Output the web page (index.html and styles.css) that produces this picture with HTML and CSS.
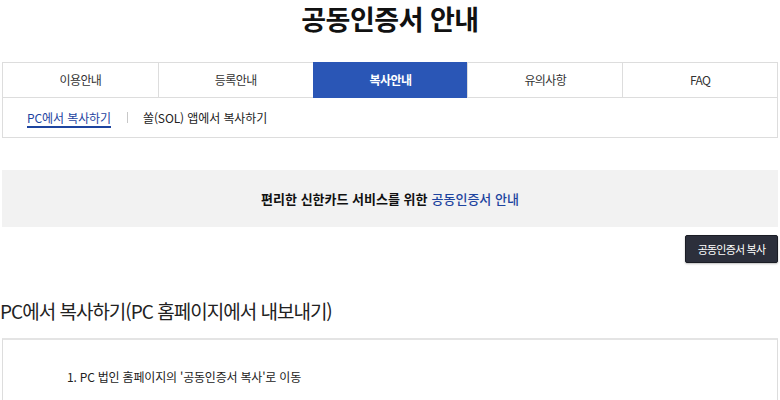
FILE: index.html
```html
<!DOCTYPE html>
<html lang="ko">
<head>
    <meta charset="UTF-8">
    <meta name="viewport" content="width=device-width, initial-scale=1.0">
    <title>공동인증서 안내</title>
    <link rel="stylesheet" href="styles.css">
</head>
<body>

    <div class="page">
        <h1 class="page-title">공동인증서 안내</h1>

        <ul class="tabs">
            <li class="tab">이용안내</li>
            <li class="tab">등록안내</li>
            <li class="tab active">복사안내</li>
            <li class="tab">유의사항</li>
            <li class="tab">FAQ</li>
        </ul>

        <div class="subtabs">
            <span class="subtab current">PC에서 복사하기</span>
            <span class="divider"></span>
            <span class="subtab">쏠(SOL) 앱에서 복사하기</span>
        </div>

        <div class="banner">
            편리한 신한카드 서비스를 위한 <span class="point">공동인증서 안내</span>
        </div>

        <div class="btn-row">
            <button class="btn-dark">공동인증서 복사</button>
        </div>

        <h2 class="section-title">PC에서 복사하기(PC 홈페이지에서 내보내기)</h2>

        <div class="step-box">
            <p class="step">1. PC 법인 홈페이지의 '공동인증서 복사'로 이동</p>
        </div>
    </div>

</body>
</html>
```

FILE: styles.css
```css
:root {
    --blue: #2a56b6;
    --linkBlue: #1d449f;
    --line: #dddddd;
}

body {
    margin: 0;
    font-family: 'Noto Sans CJK KR', 'Noto Sans', sans-serif;
    color: #222;
    background: #fff;
    overflow: hidden;
}

.page {
    padding: 0 2px;
}

.page-title {
    margin: 0 0 28px;
    padding-top: 4px;
    font-size: 27px;
    line-height: 30px;
    font-weight: 700;
    text-align: center;
    color: #111;
    letter-spacing: -0.5px;
}

/* main tabs */
.tabs {
    display: grid;
    grid-template-columns: repeat(5, 1fr);
    margin: 0;
    padding: 0;
    list-style: none;
    border: 1px solid var(--line);
}

.tab {
    height: 34px;
    line-height: 34px;
    text-align: center;
    font-size: 12px;
    letter-spacing: -0.6px;
    color: #333;
    border-left: 1px solid var(--line);
}

.tab:first-child {
    border-left: none;
}

.tab.active {
    background: var(--blue);
    color: #fff;
    font-weight: 700;
    margin: -1px 0;
    height: 36px;
    line-height: 36px;
    border-left-color: var(--blue);
}

/* sub tabs */
.subtabs {
    display: flex;
    align-items: center;
    height: 39px;
    padding: 0 24px;
    border: 1px solid var(--line);
    border-top: none;
    font-size: 12px;
    letter-spacing: -0.1px;
}

.subtab {
    line-height: 16px;
    color: #222;
}

.subtab.current {
    color: var(--linkBlue);
    padding-top: 2px;
    border-bottom: 2px solid var(--linkBlue);
}

.divider {
    width: 1px;
    height: 11px;
    margin: 0 15px 0 16px;
    background: #c8c8c8;
}

/* banner */
.banner {
    display: flex;
    align-items: center;
    justify-content: center;
    gap: 4px;
    height: 57px;
    margin-top: 32px;
    background: #f2f2f2;
    font-size: 13px;
    font-weight: 700;
    letter-spacing: 0;
    color: #111;
}

.banner .point {
    color: var(--linkBlue);
    font-weight: 500;
}

.btn-row {
    display: flex;
    justify-content: flex-end;
    margin-top: 8px;
}

.btn-dark {
    width: 93px;
    height: 28px;
    padding: 0;
    background: #2c2f3b;
    border: 1px solid #1b1d25;
    border-radius: 2px;
    color: #fff;
    font-family: inherit;
    font-size: 11px;
    letter-spacing: -0.8px;
    box-shadow: 0 1px 2px rgba(0, 0, 0, 0.25);
}

/* content */
.section-title {
    margin: 35px 0 14px 0;
    margin-left: -2px;
    font-size: 19px;
    line-height: 26px;
    font-weight: 400;
    letter-spacing: -1px;
    color: #222;
}

.step-box {
    height: 100px;
    padding: 28px 64px;
    border: 1px solid var(--line);
    border-top: 2px solid #e4e4e4;
}

.step {
    margin: 0;
    font-size: 12px;
    line-height: 18px;
    letter-spacing: -0.2px;
    color: #222;
}
```
